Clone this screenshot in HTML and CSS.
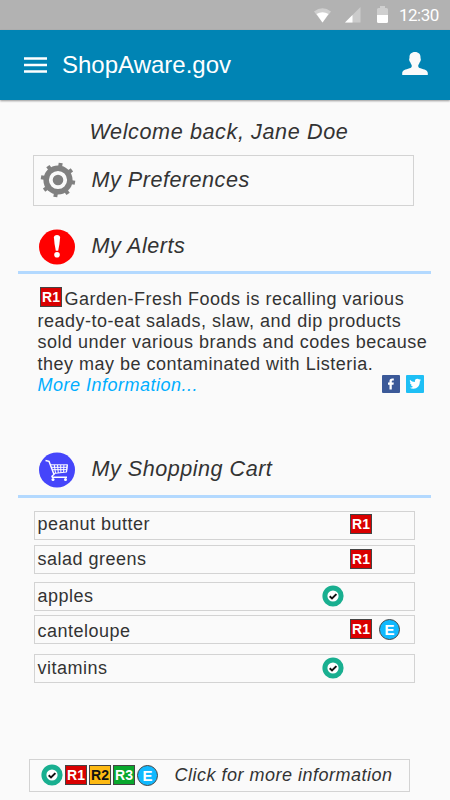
FILE: index.html
```html
<!DOCTYPE html>
<html lang="en">
<head>
<meta charset="utf-8">
<title>ShopAware.gov</title>
<link rel="stylesheet" href="styles.css">
</head>
<body>
<svg width="0" height="0" class="defs" aria-hidden="true">
  <symbol id="ok" viewBox="0 0 22 22">
    <circle cx="11" cy="11" r="8.100" fill="#fff" stroke="#19af90" stroke-width="5"/>
    <path d="M7.700 11.300l2.300 2.100 4.400-4.300" fill="none" stroke="#111" stroke-width="2"/>
  </symbol>
</svg>
<div class="status">
  <svg class="wifi" width="17" height="15" viewBox="0 0 17 15"><path d="M0 3.500Q8.500-3 17 3.500L8.500 14.500z" fill="#cfcfcf"/><path d="M2.500 6Q8.500 2.500 14.500 6L8.500 14.500z" fill="#fff"/></svg>
  <svg class="signal" width="16" height="16" viewBox="0 0 16 16"><path d="M15.500 0v15.500H0z" fill="#cbcbcb"/><path d="M7.500 8v7.500H0z" fill="#fff"/></svg>
  <svg class="battery" width="11" height="17" viewBox="0 0 11 17"><path d="M3 0h5v2h1.500q1.500 0 1.500 1.500V9H0V3.500Q0 2 1.500 2H3z" fill="#cfcfcf"/><path d="M0 9h11v6.500q0 1.500-1.500 1.500h-8Q0 17 0 15.500z" fill="#fff"/></svg>
  <span class="time">12:30</span>
</div>
<header class="appbar">
  <svg class="menu" width="23" height="16" viewBox="0 0 23 16"><path d="M0 1.500h23M0 8h23M0 14.500h23" stroke="#fff" stroke-width="2.500"/></svg>
  <h1>ShopAware.gov</h1>
  <svg class="user" width="26" height="23" viewBox="0 0 26 23"><path d="M13 0c3.600 0 5.700 2.300 5.500 5.500 0 1 .5 1.500.3 2.500-.2 1.200-.8 1.700-1.200 2.500-.4 1.500-1.300 2-1.400 3.200 0 1.500.8 2 2.300 2.600 4 1.500 7 1.700 7.300 4.700v2H.2v-2c.3-3 3.300-3.200 7.300-4.700 1.500-.6 2.300-1.100 2.300-2.600-.1-1.200-1-1.700-1.400-3.200-.4-.8-1-1.300-1.200-2.500-.2-1 .3-1.500.3-2.500C7.300 2.300 9.400 0 13 0z" fill="#fafafa"/></svg>
</header>
<main>
  <p class="welcome">Welcome back, Jane Doe</p>
  <a class="prefs">
    <svg width="36" height="36" viewBox="-18 -18 36 36">
      <g transform="rotate(9)" fill="#808080">
        <path id="t" d="M-2-17.200h4v5h-4z"/>
        <use href="#t" transform="rotate(45)"/><use href="#t" transform="rotate(90)"/><use href="#t" transform="rotate(135)"/><use href="#t" transform="rotate(180)"/><use href="#t" transform="rotate(225)"/><use href="#t" transform="rotate(270)"/><use href="#t" transform="rotate(315)"/>
      </g>
      <circle r="14.600" fill="#808080"/><circle r="7.200" fill="none" stroke="#fafafa" stroke-width="3.800"/>
    </svg>
    <span class="heading">My Preferences</span>
  </a>
  <section>
    <h2 class="title">
      <svg width="36" height="36" viewBox="0 0 36 36"><ellipse cx="18" cy="18" rx="18" ry="17.500" fill="#f00"/><path d="M14.900 8.500Q15 6 18 6t3.100 2.500Q20.800 14 19.200 21.700h-2.400Q15.200 14 14.900 8.500z" fill="#fff"/><circle cx="18" cy="25.800" r="2.800" fill="#fff"/></svg>
      <span class="heading">My Alerts</span>
    </h2>
    <div class="alert">
      <p><b class="tag r1">R1</b>Garden-Fresh Foods is recalling various<br>ready-to-eat salads, slaw, and dip products<br>sold under various brands and codes because<br>they may be contaminated with Listeria.</p>
      <div class="links">
        <a class="more">More Information...</a>
        <svg class="fb" width="18" height="18" viewBox="0 0 18 18"><rect width="18" height="18" rx="1" fill="#3b5998"/><path d="M7.500 14.500V9.700H6V7.500h1.500V6.300c0-2.300 1.200-3.100 4.300-2.700v2c-1.500-.1-2 0-2 1v.9h2l-.3 2.200H9.800v4.800z" fill="#fff"/></svg>
        <svg width="18" height="18" viewBox="0 0 18 18"><rect width="18" height="18" rx="1" fill="#1ebff5"/><path d="M4 4.800c1.400 1.500 2.800 2.200 4.900 2.300C8.500 5 9.700 3.800 11.300 3.800c.8 0 1.400.3 1.900.8l1.500-.5-.9 1.400 1.200-.2-1.200 1.300c.1 4.400-2.700 7.200-6.200 7.200-1.500 0-2.800-.4-4-1.100 1.400.1 2.500-.2 3.500-1-1.100-.1-1.800-.7-2.200-1.600h1C4.600 9.700 4 8.800 4 7.600l1 .3C3.900 7 3.600 5.900 4 4.800z" fill="#fff"/></svg>
      </div>
    </div>
  </section>
  <section class="cart">
    <h2 class="title">
      <svg width="36" height="36" viewBox="0 0 36 36"><ellipse cx="18" cy="18" rx="18" ry="17.500" fill="#4545fa"/><g fill="none" stroke="#fff"><path d="M6.500 8.500l3.500.8L15 22.500q-3 2-1.500 2.700H28" stroke-width="1.500"/><path d="M11.500 12.800h16.800L27.500 20 14.500 21.500M12.500 15.300H28M13.500 17.700h14.300M15.300 13l1.200 8M18.500 13l.8 8M21.700 13l.2 8M24.900 13l-.3 7.300" stroke-width="1"/></g><path d="M28.300 12.500l-.8 7.800" stroke="#fff"/><circle cx="14" cy="27.500" r="1.500" fill="#fff"/><circle cx="26.500" cy="27.500" r="1.500" fill="#fff"/></svg>
      <span class="heading">My Shopping Cart</span>
    </h2>
    <ul class="items">
      <li><span>peanut butter</span><b class="tag r1">R1</b></li>
      <li class="second"><span>salad greens</span><b class="tag r1">R1</b></li>
      <li class="third"><span>apples</span><svg class="ok" width="22" height="22"><use href="#ok"/></svg></li>
      <li class="fourth"><span>canteloupe</span><b class="tag r1">R1</b><b class="tag e">E</b></li>
      <li class="fifth"><span>vitamins</span><svg class="ok" width="22" height="22"><use href="#ok"/></svg></li>
    </ul>
  </section>
  <a class="legend"><svg width="22" height="22"><use href="#ok"/></svg><b class="tag r1">R1</b><b class="tag r2">R2</b><b class="tag r3">R3</b><b class="tag e">E</b><span>Click for more information</span></a>
</main>
</body>
</html>
```

FILE: styles.css
```css
* { box-sizing: border-box; }
body { margin: 0; width: 450px; height: 800px; overflow: hidden; background: #fafafa; color: #333; font: 18px/21.6px "Liberation Sans", Arial, sans-serif; letter-spacing: .5px; }
h1, h2, p, ul { margin: 0; padding: 0; font-weight: normal; list-style: none; }
svg { display: block; flex: none; }
.defs { display: none; }
.status { height: 30px; background: #b2b2b2; display: flex; align-items: center; color: #fff; font: 17px "Roboto", sans-serif; letter-spacing: -.5px; }
.wifi { margin-left: 314px; }
.signal { margin-left: 14px; }
.battery { margin: -2px 11px 0 16px; }
.appbar { height: 70px; background: #0084b4; display: flex; align-items: center; padding-left: 24px; box-shadow: 0 1px 2px rgba(0,0,0,.4); }
.appbar h1 { margin-left: 15px; color: #fff; font-size: 24px; line-height: 30px; letter-spacing: 0; }
.user { margin: -3px 22px 0 auto; }
.welcome, .heading { font-size: 21.6px; line-height: 26px; font-style: italic; }
.welcome { margin: 19px 0 0 89.5px; letter-spacing: .6px; }
.prefs { display: flex; align-items: center; width: 381px; height: 51px; margin: 10px 0 0 33px; padding-left: 6px; border: 1px solid #d3d3d3; }
.prefs svg { margin-top: -2px; }
.prefs .heading { margin: -2px 0 0 15.5px; letter-spacing: .5px; }
.title { display: flex; align-items: center; height: 45px; margin: 23px 19px 0 18px; padding: 0 0 7px 21px; border-bottom: 3px solid #b3d9ff; }
.title .heading { margin: -2px 0 0 16.5px; }
.alert { padding: 15px 0 0 37.5px; }
.alert p { white-space: nowrap; }
.tag { display: inline-block; width: 22px; height: 20px; border: 1px solid #444; color: #fff; font: bold 14px/18px "Liberation Sans", Arial, sans-serif; letter-spacing: 0; text-align: center; flex: none; }
.alert .tag { position: relative; top: -3px; margin: -2px 2.5px -3px 2.5px; }
.r1 { background: #d90000; }
.r2 { background: #fdb913; color: #111; }
.r3 { background: #09a82d; }
.e { width: 21px; height: 21px; line-height: 19px; font-size: 15px; border-radius: 50%; background: #10b9ff; }
.links { display: flex; }
.more { width: 344.5px; color: #00aeff; font-style: italic; }
.fb { margin-right: 6px; }
.cart { margin-top: 56px; }
.cart .title { margin-top: 0; }
.items { margin: 13px 0 0 34px; }
.items li { display: flex; align-items: center; width: 381px; height: 29px; padding-left: 2.5px; border: 1px solid #d3d3d3; }
.items li span { width: 312.5px; margin-top: -1px; }
.items li .tag { margin-top: -2px; }
.items .second { margin-top: 5px; }
.items .second span { margin-top: 1px; }
.items .second .tag { margin-top: 0; }
.items .third { margin-top: 8px; }
.items .third span { margin-top: 0; }
.items .fourth { margin-top: 4px; }
.items .fourth span { margin-top: 5px; }
.items .fourth .tag { margin-top: 0; }
.items .fifth { margin-top: 10px; }
.items .fifth span { margin-top: 0; }
.items .ok { margin-left: -28px; }
.items .e { margin-left: 7px; }
.legend { display: flex; align-items: center; width: 381px; height: 33px; margin: 76px 0 0 29px; padding-left: 11px; border: 1px solid #d3d3d3; font-style: italic; }
.legend .tag { font-style: normal; margin-left: 2px; }
.legend span { margin-left: 16.5px; white-space: nowrap; }
```
